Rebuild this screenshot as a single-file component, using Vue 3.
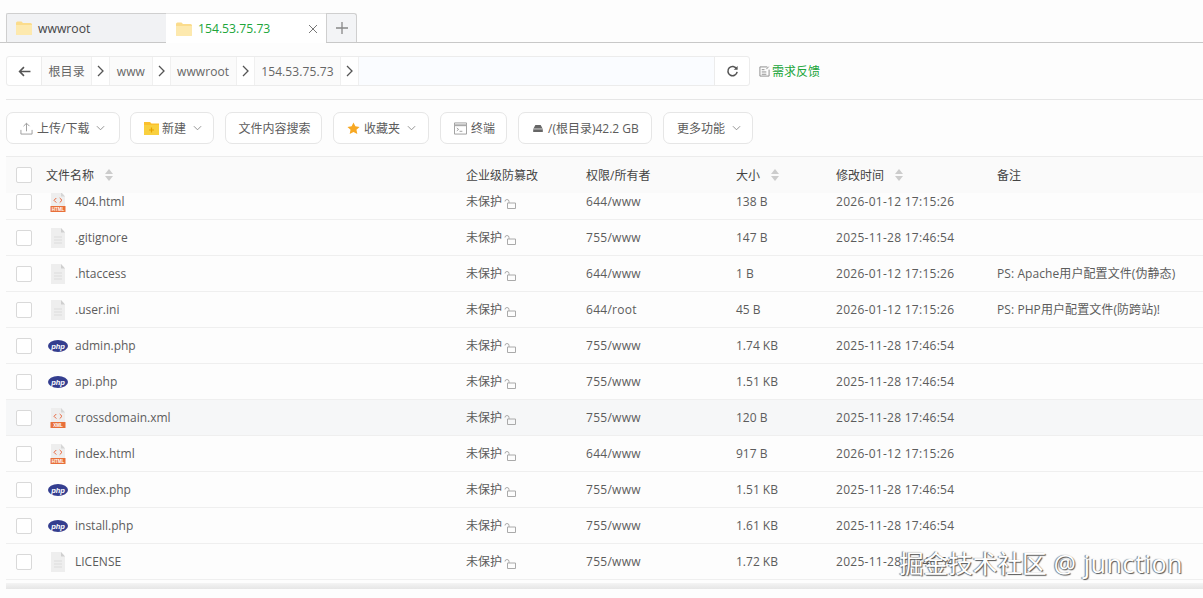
<script setup>
const crumbs = ['根目录', 'www', 'wwwroot', '154.53.75.73']
const rows = [
  { name: '404.html', type: 'html', perm: '644/www', size: '138 B', time: '2026-01-12 17:15:26', ps: '' },
  { name: '.gitignore', type: 'doc', perm: '755/www', size: '147 B', time: '2025-11-28 17:46:54', ps: '' },
  { name: '.htaccess', type: 'doc', perm: '644/www', size: '1 B', time: '2026-01-12 17:15:26', ps: 'PS: Apache用户配置文件(伪静态)' },
  { name: '.user.ini', type: 'doc', perm: '644/root', size: '45 B', time: '2026-01-12 17:15:26', ps: 'PS: PHP用户配置文件(防跨站)!' },
  { name: 'admin.php', type: 'php', perm: '755/www', size: '1.74 KB', time: '2025-11-28 17:46:54', ps: '' },
  { name: 'api.php', type: 'php', perm: '755/www', size: '1.51 KB', time: '2025-11-28 17:46:54', ps: '' },
  { name: 'crossdomain.xml', type: 'xml', perm: '755/www', size: '120 B', time: '2025-11-28 17:46:54', ps: '', hover: true },
  { name: 'index.html', type: 'html', perm: '644/www', size: '917 B', time: '2026-01-12 17:15:26', ps: '' },
  { name: 'index.php', type: 'php', perm: '755/www', size: '1.51 KB', time: '2025-11-28 17:46:54', ps: '' },
  { name: 'install.php', type: 'php', perm: '755/www', size: '1.61 KB', time: '2025-11-28 17:46:54', ps: '' },
  { name: 'LICENSE', type: 'doc', perm: '755/www', size: '1.72 KB', time: '2025-11-28 17:46:54', ps: '' }
]
</script>

<template>
  <div class="page">
    <div class="tabs">
      <div class="tab inactive">
        <svg class="folder" viewBox="0 0 16 14"><path d="M0 2a1.500 1.500 0 0 1 1.500-1.500h4L7 2h7.500A1.500 1.500 0 0 1 16 3.500V12.500a1.500 1.500 0 0 1-1.500 1.500h-13A1.500 1.500 0 0 1 0 12.500z" fill="#fbdc8c"/><path d="M0 4h16v8.500a1.500 1.500 0 0 1-1.500 1.500h-13A1.500 1.500 0 0 1 0 12.500z" fill="#fde9ae"/></svg>
        <span>wwwroot</span>
      </div>
      <div class="tab active">
        <svg class="folder" viewBox="0 0 16 14"><path d="M0 2a1.500 1.500 0 0 1 1.500-1.500h4L7 2h7.500A1.500 1.500 0 0 1 16 3.500V12.500a1.500 1.500 0 0 1-1.500 1.500h-13A1.500 1.500 0 0 1 0 12.500z" fill="#fbdc8c"/><path d="M0 4h16v8.500a1.500 1.500 0 0 1-1.500 1.500h-13A1.500 1.500 0 0 1 0 12.500z" fill="#fde9ae"/></svg>
        <span class="tab-title">154.53.75.73</span>
        <svg class="close" viewBox="0 0 10 10"><path d="M1 1l8 8M9 1l-8 8" stroke="#777" stroke-width="1" fill="none"/></svg>
      </div>
      <div class="tab-add">
        <svg viewBox="0 0 12 12"><path d="M6 0v12M0 6h12" stroke="#888" stroke-width="1.300" fill="none"/></svg>
      </div>
    </div>

    <div class="pathbar">
      <div class="path">
        <div class="back">
          <svg viewBox="0 0 12 10"><path d="M5.500 1L1.500 5l4 4M1.500 5H11.500" stroke="#555" stroke-width="1.500" fill="none"/></svg>
        </div>
        <template v-for="c in crumbs" :key="c">
          <span class="crumb">{{ c }}</span>
          <span class="sep">
            <svg viewBox="0 0 7 12"><path d="M1 1l5 5-5 5" stroke="#555" stroke-width="1.300" fill="none"/></svg>
          </span>
        </template>
        <div class="path-fill"></div>
        <div class="refresh">
          <svg viewBox="0 0 14 14"><path d="M11.500 4.200A5 5 0 1 0 12 7.500" stroke="#555" stroke-width="1.700" fill="none"/><path d="M12.500 1v4.200H8.300z" fill="#555"/></svg>
        </div>
      </div>
      <div class="feedback">
        <svg viewBox="0 0 12 12"><path d="M9 1H1v10h10V4M3 4h3M3 6.500h5M3 9h5M10.500.8L8 3.500" stroke="#888" fill="none"/></svg>
        <span>需求反馈</span>
      </div>
    </div>

    <div class="toolbar">
      <button class="btn w113">
        <svg class="ico tight" viewBox="0 0 14 14"><path d="M7 10V1.500M3.800 4.500L7 1.300l3.200 3.200M1 8.500V13h12V8.500" stroke="#999" fill="none"/></svg>
        <span>上传/下载</span>
        <svg class="caret" viewBox="0 0 10 6"><path d="M1 1l4 4 4-4" stroke="#888" fill="none"/></svg>
      </button>
      <button class="btn w84">
        <svg class="ico wide" viewBox="0 0 15 13"><path d="M0 0h6l1.500 1.500H15V13H0z" fill="#fbc02d"/><path d="M0 3h15v10H0z" fill="#f9d03f"/><path d="M7.500 5.500v5M5 8h5" stroke="#e9a300" stroke-width="1.200"/></svg>
        <span>新建</span>
        <svg class="caret" viewBox="0 0 10 6"><path d="M1 1l4 4 4-4" stroke="#888" fill="none"/></svg>
      </button>
      <button class="btn w97 center"><span>文件内容搜索</span></button>
      <button class="btn w96">
        <svg class="ico tight" viewBox="0 0 14 14"><path d="M7 .5l2 4.200 4.500.6-3.300 3.100.9 4.600L7 10.800 2.900 13l.9-4.600L.5 5.300 5 4.700z" fill="#f7a823"/></svg>
        <span>收藏夹</span>
        <svg class="caret" viewBox="0 0 10 6"><path d="M1 1l4 4 4-4" stroke="#888" fill="none"/></svg>
      </button>
      <button class="btn w67">
        <svg class="ico tight" viewBox="0 0 14 13"><path d="M.5.500h13v12H.5z" stroke="#999" fill="none"/><path d="M.5 3h13" stroke="#aaa" stroke-width="2"/><path d="M3 6l2 1.500L3 9M6 9.500h3" stroke="#999" fill="none"/></svg>
        <span>终端</span>
      </button>
      <button class="btn w134">
        <svg class="disk" viewBox="0 0 11 8"><path d="M2.500 0h6L11 4.500V8H0V4.500z" fill="#666"/><path d="M0 4.500h11" stroke="#fff" stroke-width=".8"/></svg>
        <span>/(根目录)42.2 GB</span>
      </button>
      <button class="btn w90">
        <span>更多功能</span>
        <svg class="caret" viewBox="0 0 10 6"><path d="M1 1l4 4 4-4" stroke="#888" fill="none"/></svg>
      </button>
    </div>

    <div class="table">
      <div class="thead">
        <div class="c-check"><i class="box"></i></div>
        <div class="c-name head-name">文件名称<i class="sort first"></i></div>
        <div class="c-prot">企业级防篡改</div>
        <div class="c-perm">权限/所有者</div>
        <div class="c-size">大小<i class="sort"></i></div>
        <div class="c-time">修改时间<i class="sort"></i></div>
        <div class="c-ps">备注</div>
      </div>
      <div class="tbody">
        <div v-for="r in rows" :key="r.name" class="row" :class="{ hover: r.hover }">
          <div class="c-check"><i class="box"></i></div>
          <div class="c-name">
            <span class="ficon">
              <svg v-if="r.type === 'doc'" viewBox="0 0 16 20"><path d="M1 0h10l4 4.500V20H1z" fill="#eeeeee"/><path d="M11 0l4 4.500h-4z" fill="#cfcfcf"/><path d="M4 9h8M4 12h8M4 15h8" stroke="#dcdcdc"/></svg>
              <svg v-else-if="r.type === 'php'" class="php" viewBox="0 0 20 12"><ellipse cx="10" cy="6" rx="10" ry="6" fill="#343e8f"/><text x="10" y="8.500" text-anchor="middle" class="php-text">php</text></svg>
              <svg v-else viewBox="0 0 16 20"><path d="M1 0h10l4 4.500V14H1z" fill="#eeeeee"/><path d="M11 0l4 4.500h-4z" fill="#d6d6d6"/><path d="M6.300 6L4 8.300l2.300 2.300M9.700 6L12 8.300l-2.300 2.300" stroke="#e8683f" fill="none"/><path d="M.5 14h15v6H.5z" fill="#e8703a"/><text x="8" y="19" text-anchor="middle" class="file-text">{{ r.type.toUpperCase() }}</text></svg>
            </span>
            <span>{{ r.name }}</span>
          </div>
          <div class="c-prot">
            未保护<svg class="lock" viewBox="0 0 12 11"><path d="M1 3.500a2 2 0 0 1 4 0V5" stroke="#aaa" fill="none"/><path d="M3.500 5h8v5.500h-8z" stroke="#aaa" fill="none"/></svg>
          </div>
          <div class="c-perm num">{{ r.perm }}</div>
          <div class="c-size">{{ r.size }}</div>
          <div class="c-time num">{{ r.time }}</div>
          <div class="c-ps">{{ r.ps }}</div>
        </div>
      </div>
      <div class="hscroll"></div>
    </div>

    <div class="watermark">掘金技术社区<span class="wm-latin"> @ junction</span></div>
  </div>
</template>

<style>
html, body { margin: 0; background: #fdfdfd; overflow: hidden; }
</style>

<style scoped>
.page {
  position: relative;
  width: 1203px;
  height: 598px;
  overflow: hidden;
  padding: 13px 0 0 6px;
  box-sizing: border-box;
  background: #fdfdfd;
  color: #5c5c5c;
  font-family: "Open Sans", "Noto Sans CJK SC", sans-serif;
  font-size: 12px;
}
.tabs {
  display: flex;
  height: 30px;
  box-sizing: border-box;
  margin-left: -6px;
  padding-left: 6px;
  border-bottom: 1px solid #c8c8c8;
}
.tab {
  width: 160px;
  height: 30px;
  box-sizing: border-box;
  display: flex;
  align-items: center;
  padding-left: 10px;
  font-size: 12.200px;
  border-top: 1px solid #cfcfcf;
}
.tab.inactive {
  background: #f1f2f4;
  color: #444;
  border-left: 1px solid #cfcfcf;
  border-bottom: 1px solid #c8c8c8;
  border-radius: 2px 0 0 0;
}
.tab.active {
  background: #fff;
  border-top-color: #e4e4e4;
  color: #20a53a;
}
.folder { width: 16px; height: 14px; margin-right: 6px; }
.tab.inactive .folder { margin-left: -1px; }
.tab-title { flex: 1; }
.close { width: 10px; height: 10px; margin-right: 8px; }
.tab-add {
  width: 31px;
  height: 29px;
  box-sizing: border-box;
  background: #f3f4f6;
  border: 1px solid #cfcfcf;
  border-bottom: 0;
  border-radius: 0 3px 0 0;
  display: flex;
  align-items: center;
  justify-content: center;
}
.tab-add svg { width: 12px; height: 12px; }

.pathbar {
  display: flex;
  align-items: center;
  margin-top: 13px;
  height: 30px;
}
.path {
  width: 744px;
  height: 30px;
  box-sizing: border-box;
  border: 1px solid #ececec;
  border-radius: 3px;
  display: flex;
  align-items: stretch;
  color: #666;
  background: #fff;
}
.back {
  width: 34px;
  border-right: 1px solid #ececec;
  display: flex;
  align-items: center;
  justify-content: center;
}
.back svg { width: 13px; height: 11px; }
.crumb {
  display: flex;
  align-items: center;
  padding: 0 6.500px;
  white-space: nowrap;
  background: #fbfbfb;
  letter-spacing: .1px;
}
.sep {
  width: 19px;
  box-sizing: border-box;
  border-left: 1px solid #f0f0f0;
  border-right: 1px solid #f0f0f0;
  display: flex;
  align-items: center;
  justify-content: center;
  background: #fff;
}
.sep svg { width: 7px; height: 12px; }
.path-fill { flex: 1; background: #fafcff; }
.refresh {
  width: 34px;
  border-left: 1px solid #ececec;
  display: flex;
  align-items: center;
  justify-content: center;
}
.refresh svg { width: 13px; height: 13px; }
.feedback {
  display: flex;
  align-items: center;
  margin-left: 9px;
  color: #20a53a;
}
.feedback svg { width: 11px; height: 11px; margin-right: 2px; }

.toolbar {
  display: flex;
  gap: 11px;
  margin-top: 13px;
  padding-top: 12px;
  border-top: 1px solid #e6e6e6;
}
.btn {
  height: 32px;
  box-sizing: border-box;
  background: #fff;
  border: 1px solid #e6e6e6;
  border-radius: 7px;
  padding: 0 0 0 13px;
  display: flex;
  align-items: center;
  font: inherit;
  color: #5c5c5c;
}
.btn.center { justify-content: center; padding: 0 0 0 2px; }
.w113 { width: 114px; }
.w84 { width: 84px; margin-left: -1px; }
.w97 { width: 97px; }
.w96 { width: 96px; }
.w67 { width: 67px; }
.w134 { width: 134px; padding-left: 14px; }
.w90 { width: 90px; }
.ico { width: 13px; height: 13px; margin-right: 5px; flex: none; }
.ico.tight { margin-right: 4px; }
.ico.wide { width: 15px; margin-right: 3px; }
.disk { width: 10px; height: 7px; margin-right: 5px; flex: none; }
.caret { width: 9px; height: 6px; margin-left: 7px; flex: none; }

.table {
  margin-top: 12px;
  border-top: 1px solid #ececec;
}
.thead, .row {
  position: relative;
  display: grid;
  grid-template-columns: 40px 420px 120px 150px 100px 161px 1fr;
  align-items: center;
  line-height: 17px;
}
.thead {
  z-index: 1;
  height: 36px;
  background: #fafafa;
  color: #444;
}
.tbody { margin-top: -9px; }
.row {
  height: 36px;
  border-bottom: 1px solid #efefef;
  box-sizing: border-box;
  background: #fdfdfd;
}
.row.hover { background: #f6f7f8; }
.c-check { padding-left: 10px; display: flex; }
.box {
  display: block;
  width: 16px;
  height: 16px;
  box-sizing: border-box;
  background: #fff;
  border: 1px solid #d9d9d9;
  border-radius: 2px;
}
.c-name { display: flex; align-items: center; padding-left: 4px; }
.head-name { padding-left: 0; }
.ficon {
  width: 16px;
  height: 20px;
  margin-right: 9px;
  display: flex;
  align-items: center;
  justify-content: center;
}
.ficon svg { width: 16px; height: 20px; flex: none; }
.ficon svg.php { width: 20px; height: 12px; }
.php-text { font: italic 700 7.500px "Liberation Sans", sans-serif; fill: #fff; }
.file-text { font: 700 4.500px "Liberation Sans", sans-serif; fill: #fff; }
.c-prot { display: flex; align-items: center; }
.lock { width: 12px; height: 11px; margin: 3px 0 0 2px; }
.num { letter-spacing: .27px; }
.c-ps { white-space: nowrap; letter-spacing: .08px; }
.sort {
  display: inline-block;
  position: relative;
  width: 9px;
  height: 12px;
  margin-left: 11px;
  vertical-align: -1px;
}
.sort::before, .sort::after {
  content: "";
  position: absolute;
  left: 0;
  border-left: 4.500px solid transparent;
  border-right: 4.500px solid transparent;
}
.sort::before { top: 0; border-bottom: 5px solid #ccc; }
.sort::after { bottom: 0; border-top: 5px solid #ccc; }
.hscroll {
  height: 6px;
  margin-top: 3px;
  background: linear-gradient(#f4f4f4, #e6e6e6);
}
.watermark {
  position: absolute;
  left: 899px;
  top: 546px;
  font-family: "Open Sans", "Noto Sans CJK SC", sans-serif;
  font-size: 24.600px;
  line-height: 36px;
  color: #fff;
  white-space: nowrap;
  text-shadow: 1px 1px 1px #555, -1px 0 1px #777;
}
.wm-latin { letter-spacing: .8px; }
</style>
